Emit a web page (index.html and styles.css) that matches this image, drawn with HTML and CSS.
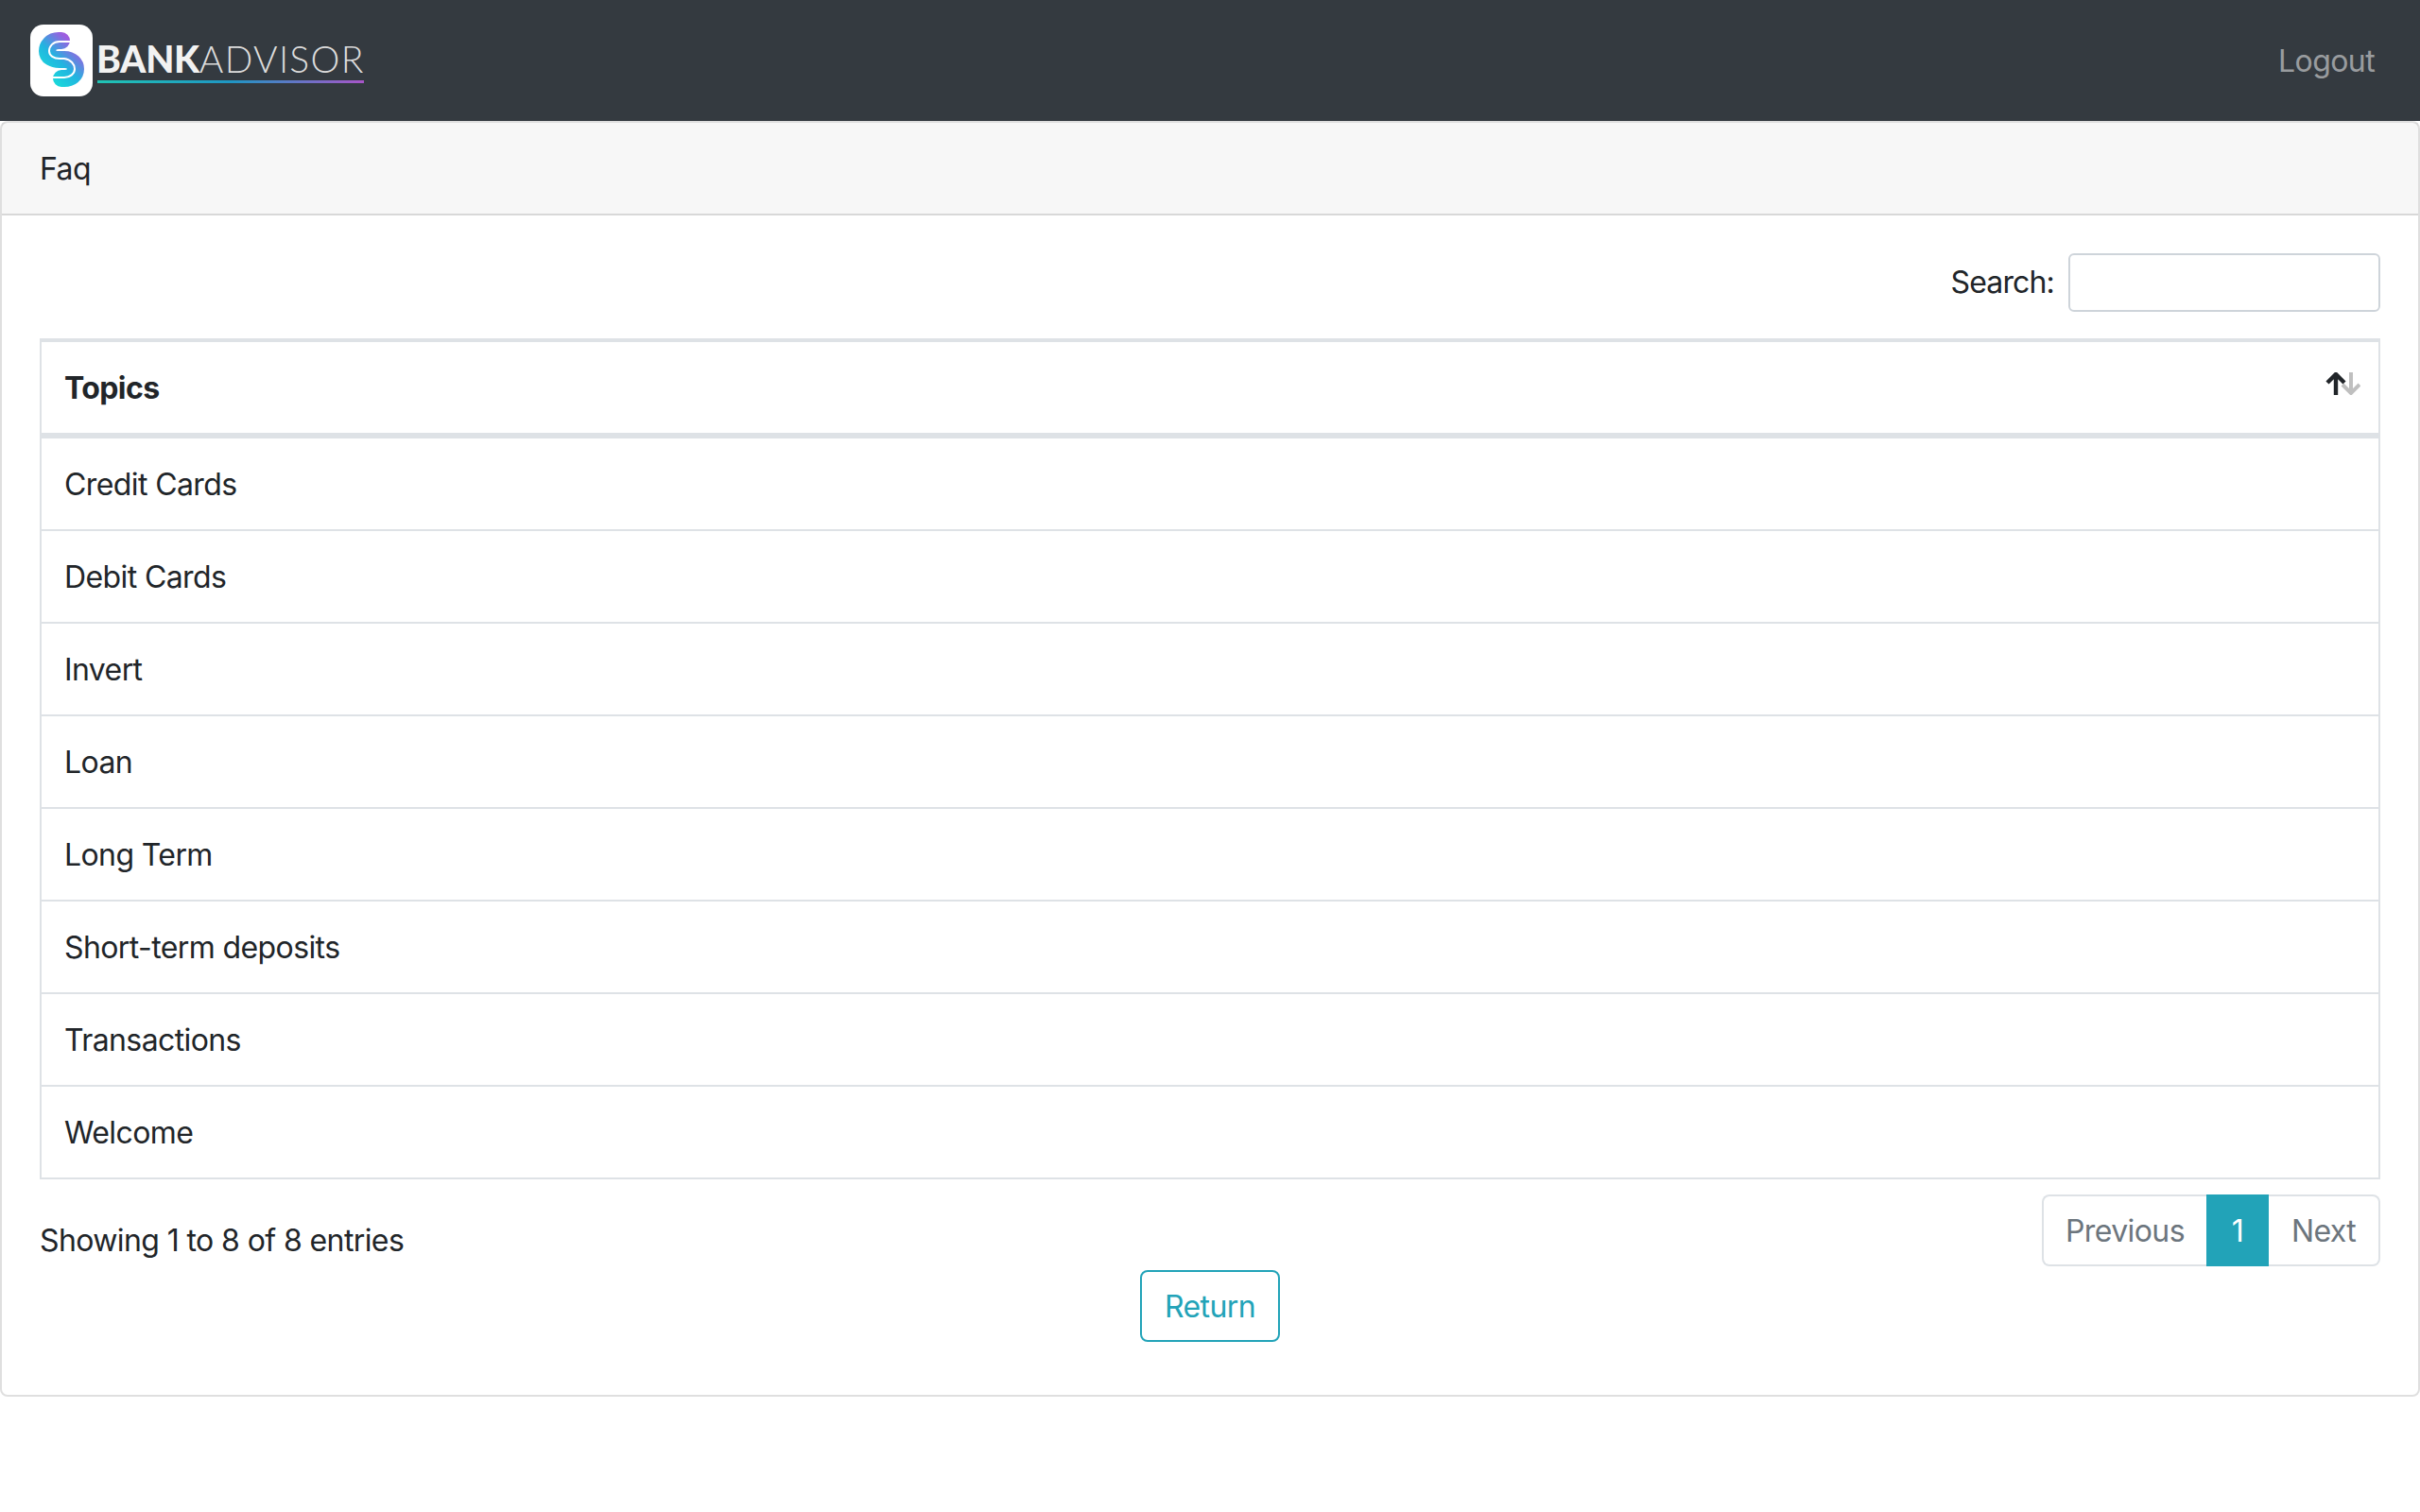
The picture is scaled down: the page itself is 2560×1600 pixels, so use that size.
FILE: index.html
```html
<!DOCTYPE html>
<html lang="en">
<head>
<meta charset="utf-8">
<title>Faq</title>
<link rel="stylesheet" href="styles.css">
</head>
<body>
<nav class="navbar">
  <a class="brand" href="#">
    <span class="brand-icon">
      <svg width="66" height="76" viewBox="0 0 66 76">
        <defs>
          <linearGradient id="sGrad" gradientUnits="userSpaceOnUse" x1="12" y1="60" x2="56" y2="14">
            <stop offset="0" stop-color="#16e6d8"/>
            <stop offset="0.45" stop-color="#22b4e0"/>
            <stop offset="0.8" stop-color="#9a5fe0"/>
            <stop offset="1" stop-color="#b45ad8"/>
          </linearGradient>
        </defs>
        <path d="M33 17H30C22 17 18 23 18 28C18 34 24 37 31 37H36C44 37 48 42 48 47C48 53 43 57 36 57H33" fill="none" stroke="url(#sGrad)" stroke-width="18" stroke-linecap="round"/>
        <path d="M43 18H31C24 18 20 23 20 28C20 33 25 36 31 36H36C43 37 47 42 47 47C47 52 42 56 36 56H23" fill="none" stroke="#fff" stroke-width="2"/>
      </svg>
    </span>
    <span class="brand-text">
      <span class="brand-name"><b>BANK</b><span class="brand-light">ADVISOR</span></span>
      <span class="brand-line"></span>
    </span>
  </a>
  <a class="logout" href="#">Logout</a>
</nav>
<main class="card">
  <header class="card-header">Faq</header>
  <section class="card-body">
    <div class="search-row">
      <label class="search-label" for="search">Search:</label>
      <input class="search-input" id="search" type="search">
    </div>
    <table class="topics">
      <thead>
        <tr>
          <th>
            <div class="th-inner">
              <span>Topics</span>
              <svg class="sort" width="37" height="24" viewBox="0 0 37 24">
                <path d="M27 0V22M18 13L27 22L36 13" fill="none" stroke="#bfbfbf" stroke-width="4"/>
                <path d="M11 24V2M2 11L11 2L20 11" fill="none" stroke="#212529" stroke-width="4.4"/>
              </svg>
            </div>
          </th>
        </tr>
      </thead>
      <tbody>
        <tr><td>Credit Cards</td></tr>
        <tr><td>Debit Cards</td></tr>
        <tr><td>Invert</td></tr>
        <tr><td>Loan</td></tr>
        <tr><td>Long Term</td></tr>
        <tr><td>Short-term deposits</td></tr>
        <tr><td>Transactions</td></tr>
        <tr><td>Welcome</td></tr>
      </tbody>
    </table>
    <div class="table-foot">
      <div class="info">Showing 1 to 8 of 8 entries</div>
      <ul class="pagination">
        <li class="page first"><a href="#">Previous</a></li>
        <li class="page active"><a href="#">1</a></li>
        <li class="page last"><a href="#">Next</a></li>
      </ul>
    </div>
    <div class="actions"><a class="btn-return" href="#">Return</a></div>
  </section>
</main>
</body>
</html>
```
FILE: styles.css
```css
* { box-sizing: border-box; }
html, body { margin: 0; padding: 0; }
body {
  font-family: Inter, "Liberation Sans", sans-serif;
  font-size: 32px;
  line-height: 48px;
  color: #212529;
  background: #fff;
  letter-spacing: -0.6px;
}
a { text-decoration: none; color: inherit; }

.navbar {
  height: 128px;
  background: #343a40;
  display: flex;
  align-items: center;
  justify-content: space-between;
  padding: 0 48px 0 32px;
}
.brand { display: flex; align-items: flex-start; }
.brand-icon {
  width: 66px;
  height: 76px;
  background: #fff;
  border-radius: 14px;
  display: block;
}
.brand-icon svg { display: block; }
.brand-text {
  display: flex;
  flex-direction: column;
  margin-left: 4px;
  padding-top: 17px;
  width: 283px;
}
.brand-name {
  font-family: Lato, sans-serif;
  font-size: 39px;
  line-height: 39px;
  color: #f2f2f2;
  white-space: nowrap;
  letter-spacing: 0.2px;
}
.brand-name b { font-weight: 900; letter-spacing: -0.3px; }
.brand-light { font-weight: 300; color: #dcdcdc; letter-spacing: 1.3px; }
.brand-line {
  height: 3px;
  margin: 3px 0 0 1px;
  background: linear-gradient(90deg, #20c4b4, #1f96c4 50%, #a855c8);
}
.logout { color: rgba(255, 255, 255, 0.5); padding-top: 2px; }

.card {
  height: 1350px;
  border: 2px solid rgba(0, 0, 0, 0.125);
  border-radius: 8px;
}
.card-header {
  height: 98px;
  padding: 25px 40px 23px;
  background: rgba(0, 0, 0, 0.03);
  border-bottom: 2px solid rgba(0, 0, 0, 0.125);
}
.card-body { padding: 40px 40px 0; }

.search-row {
  display: flex;
  justify-content: flex-end;
  align-items: center;
  gap: 15px;
  height: 62px;
  margin-bottom: 28px;
}
.search-label { letter-spacing: -0.85px; }
.search-input {
  width: 330px;
  height: 62px;
  border: 2px solid #ced4da;
  border-radius: 6px;
  background: #fff;
}

.topics {
  width: 100%;
  border-collapse: separate;
  border-spacing: 0;
  border: 2px solid #dee2e6;
}
.topics th {
  padding: 25px 19px 23px 24px;
  text-align: left;
  font-weight: 700;
  border-top: 2px solid #dee2e6;
  border-bottom: 4px solid #dee2e6;
}
.th-inner { display: flex; justify-content: space-between; align-items: flex-start; }
.sort { margin-top: 7px; }
.topics td {
  padding: 25px 24px 23px;
  border-top: 2px solid #dee2e6;
}

.table-foot {
  display: flex;
  justify-content: space-between;
  align-items: flex-start;
  margin-top: 16px;
}
.info { padding-top: 25px; }
.pagination {
  display: flex;
  list-style: none;
  margin: 0;
  padding: 0;
  height: 76px;
}
.page a {
  display: block;
  height: 76px;
  padding: 13px 0 11px;
  text-align: center;
  color: #6c757d;
  border: 2px solid #dee2e6;
}
.page.first a { width: 174px; border-right: 0; border-radius: 8px 0 0 8px; }
.page.last a { width: 118px; border-left: 0; border-radius: 0 8px 8px 0; }
.page.active a {
  width: 66px;
  background: #22a3b8;
  border-color: #22a3b8;
  color: #fff;
}

.actions { display: flex; justify-content: center; margin-top: 4px; }
.btn-return {
  display: block;
  height: 76px;
  padding: 13px 24px 11px;
  color: #22a3b8;
  border: 2px solid #22a3b8;
  border-radius: 8px;
}
```
